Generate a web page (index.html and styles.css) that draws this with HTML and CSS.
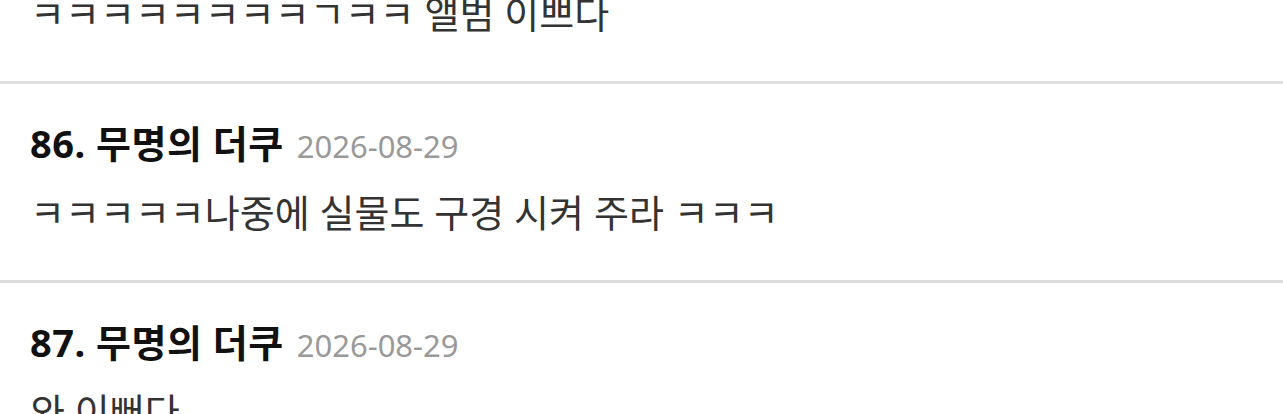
FILE: index.html
```html
<!DOCTYPE html>
<html lang="ko">
<head>
    <meta charset="UTF-8">
    <meta name="viewport" content="width=device-width, initial-scale=1.0">
    <title>댓글</title>
    <link rel="stylesheet" href="styles.css">
</head>
<body>
    <div class="comment-list">
        <div class="comment">
            <div class="comment-head">
                <span class="author">85. 무명의 더쿠</span>
                <span class="date">2026-08-29</span>
            </div>
            <p class="comment-body">ㅋㅋㅋㅋㅋㅋㅋㅋㄱㅋㅋ 앨범 이쁘다</p>
        </div>

        <div class="comment">
            <div class="comment-head">
                <span class="author">86. 무명의 더쿠</span>
                <span class="date">2026-08-29</span>
            </div>
            <p class="comment-body">ㅋㅋㅋㅋㅋ나중에 실물도 구경 시켜 주라 ㅋㅋㅋ</p>
        </div>

        <div class="comment">
            <div class="comment-head">
                <span class="author">87. 무명의 더쿠</span>
                <span class="date">2026-08-29</span>
            </div>
            <p class="comment-body">와 이뻐다</p>
        </div>
    </div>
</body>
</html>
```

FILE: styles.css
```css
* {
    margin: 0;
    padding: 0;
    box-sizing: border-box;
}

body {
    font-family: "Noto Sans", "Noto Sans CJK KR", sans-serif;
    background: #fff;
    color: #111;
    overflow: hidden;
}

.comment-list {
    margin-top: -115px;
}

.comment {
    padding: 39px 30px 46px;
    border-bottom: 3px solid #dedede;
}

.comment-head {
    display: flex;
    align-items: baseline;
    gap: 13px;
    height: 40px;
    line-height: 40px;
}

.author {
    font-size: 38px;
    font-weight: bold;
    letter-spacing: 0.5px;
    color: #111;
}

.date {
    font-size: 31px;
    color: #999;
}

.comment-body {
    margin-top: 27px;
    font-size: 38px;
    line-height: 44px;
    height: 44px;
    color: #333;
}
```
